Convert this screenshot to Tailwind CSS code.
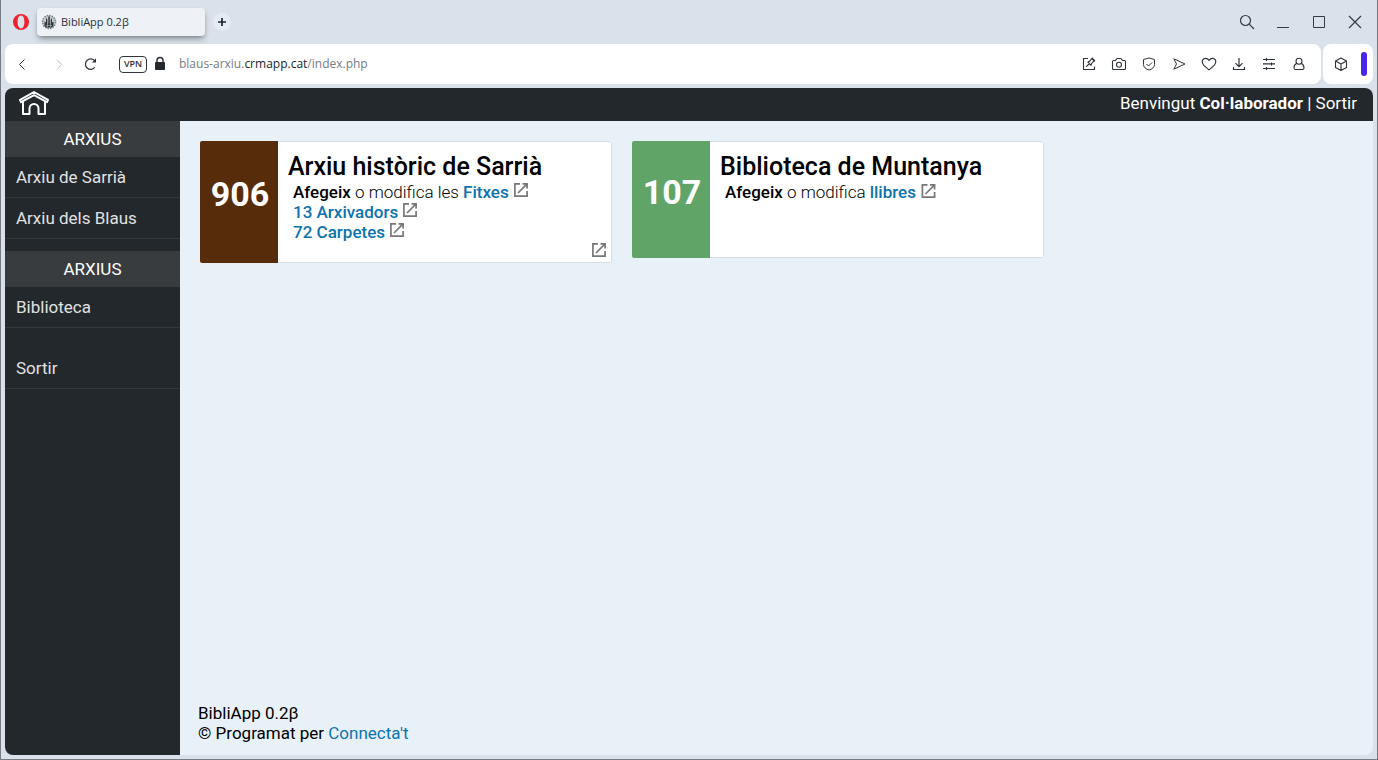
<!DOCTYPE html>
<html lang="ca">
<head>
<meta charset="utf-8">
<meta name="viewport" content="width=device-width, initial-scale=1">
<title>BibliApp 0.2β</title>
<script src="https://cdn.jsdelivr.net/npm/@tailwindcss/browser@4"></script>
</head>
<body class="flex h-screen flex-col overflow-hidden border-x border-b border-[#777b82] bg-[#d9e1ea] pr-1 pb-1 pl-1 font-['Roboto',sans-serif] text-black">
<svg class="hidden" aria-hidden="true">
  <symbol id="open" viewBox="0 0 16 16" fill="none" stroke="currentColor" stroke-width="1.7"><path d="M7 1.9H1.9V14.1H14.1V9M9.5 1.9H14.1V6.5M13.8 2.2L5 11"/></symbol>
</svg>

<!-- Tab strip -->
<div class="flex h-11 shrink-0 items-center font-['Open_Sans','Noto_Sans',sans-serif] text-[#2b3036]">
  <button class="flex w-8 items-center justify-center" aria-label="Menú d'Opera">
    <svg class="size-4" viewBox="0 0 16 16"><path fill="#f0202f" fill-rule="evenodd" d="M8 0a8 8 0 1 0 0 16A8 8 0 1 0 8 0ZM8 1.6C10.3 1.6 11.4 4.4 11.4 8S10.3 14.4 8 14.4 4.6 11.600 4.600 8 5.700 1.600 8 1.600Z"/></svg>
  </button>
  <button class="flex h-7 w-[168px] items-center gap-1 rounded bg-[#eef2f7] px-1 text-[11px] shadow-md shadow-black/30">
    <svg class="size-4" viewBox="0 0 16 16"><circle cx="8" cy="8" r="6.500" fill="#c6cbd0" stroke="#777d83" stroke-width="1.500" stroke-dasharray="1.500 1"/><path fill="#30353a" d="M3.500 12V7.500l1.500 1V4L6.300 5.500v4h1V2.500h1.500v7h1V5.500L11 4v4.500l1.500-1v4.500l-2 1.500h-5Z"/><path stroke="#aab0b5" stroke-width=".7" d="M5 11.500h6M6.500 9v4M9.500 9v4"/></svg>
    <span>BibliApp 0.2β</span>
  </button>
  <button class="ml-2 flex size-[18px] items-center justify-center rounded-full bg-[#e5ebf2]" aria-label="Pestanya nova">
    <svg class="size-2" viewBox="0 0 8 8" stroke="#20252b" stroke-width="1.700"><path d="M4 0v8M0 4h8"/></svg>
  </button>
  <div class="ml-auto flex text-[#353b42]">
    <button class="flex w-9 justify-center" aria-label="Cerca"><svg class="size-4" viewBox="0 0 16 16" fill="none" stroke="currentColor" stroke-width="1.200"><circle cx="6.500" cy="6.500" r="5"/><path d="M10.200 10.200L15 15"/></svg></button>
    <button class="flex w-9 justify-center" aria-label="Minimitza"><svg class="size-4" viewBox="0 0 16 16" stroke="currentColor"><path d="M2 13.500h12"/></svg></button>
    <button class="flex w-9 justify-center" aria-label="Maximitza"><svg class="size-4" viewBox="0 0 16 16" fill="none" stroke="currentColor"><path d="M2.500 2.500h11v11h-11z"/></svg></button>
    <button class="flex w-9 justify-center" aria-label="Tanca"><svg class="size-4" viewBox="0 0 16 16" stroke="currentColor" stroke-width="1.200"><path d="M2 2l12 12M14 2L2 14"/></svg></button>
  </div>
</div>

<!-- Address bar -->
<div class="flex h-10 shrink-0 gap-0.5 font-['Open_Sans','Noto_Sans',sans-serif] text-[#2d3238]">
  <div class="flex min-w-0 grow items-center rounded-lg bg-white pr-[7px]">
    <button class="flex w-[34px] justify-center" aria-label="Enrere"><svg class="size-4" viewBox="0 0 16 16" fill="none" stroke="currentColor"><path d="M10.500 3.500L5.500 8.500l5 5"/></svg></button>
    <button class="flex w-10 justify-center text-[#b9bdc2]" aria-label="Endavant"><svg class="size-4" viewBox="0 0 16 16" fill="none" stroke="currentColor"><path d="M6 3.500l4.500 5L6 13.500"/></svg></button>
    <button class="flex w-6 justify-center" aria-label="Recarrega"><svg class="size-4" viewBox="0 0 16 16" fill="none" stroke="currentColor" stroke-width="1.200"><path d="M11.800 11.300A5.200 5.200 0 1 1 11.800 5"/><path d="M13 2.300V6.400H9Z" fill="currentColor" stroke="none"/></svg></button>
    <button class="ml-4 flex h-[17px] w-7 items-center justify-center rounded border border-[#30353b] text-[9px] font-semibold">VPN</button>
    <svg class="ml-1 size-[18px]" viewBox="0 0 18 18"><path d="M6 8V5.500a3 3 0 0 1 6 0v2.500" fill="none" stroke="#25292e" stroke-width="1.400"/><rect x="4" y="7" width="10" height="8" rx="1" fill="#25292e"/></svg>
    <div class="ml-2.5 grow text-xs text-[#737b83] outline-none" contenteditable="true" role="textbox" aria-label="Adreça">blaus-arxiu.<span class="text-[#202428]">crmapp.cat</span>/index.php</div>
    <button class="flex w-[30px] justify-center" aria-label="Anota"><svg class="size-4" viewBox="0 0 16 16" fill="none" stroke="currentColor" stroke-width="1.100"><path d="M7 2.500H2.500v11h11V10.500M5 10.800L8.500 7.500M7 6.200l3 3 .8-2 2.800-2.700L11.200 2 8.800 5ZM10.800 2.500l3 3"/></svg></button>
    <button class="flex w-[30px] justify-center" aria-label="Captura"><svg class="size-4" viewBox="0 0 16 16" fill="none" stroke="currentColor" stroke-width="1.100"><path d="M2.500 4.500H4.500L6 2.500h4l1.500 2h2a1 1 0 0 1 1 1v7a1 1 0 0 1-1 1h-11a1 1 0 0 1-1-1v-7a1 1 0 0 1 1-1Z"/><circle cx="8" cy="8.800" r="2.500"/></svg></button>
    <button class="flex w-[30px] justify-center" aria-label="Protecció"><svg class="size-4" viewBox="0 0 16 16" fill="none" stroke="currentColor"><path d="M8 2l5.500 1.500V8.500C13.500 11.200 11 13.200 8 14 5 13.200 2.500 11.200 2.500 8.500V3.500ZM5.500 8l2 2 3.500-3.500"/></svg></button>
    <button class="flex w-[30px] justify-center" aria-label="Envia"><svg class="size-4" viewBox="0 0 16 16" fill="none" stroke="currentColor" stroke-linejoin="round"><path d="M2.800 2.800L14 8 2.800 13.200 5.500 8Z"/></svg></button>
    <button class="flex w-[30px] justify-center" aria-label="Preferits"><svg class="size-4" viewBox="0 0 16 16" fill="none" stroke="currentColor" stroke-width="1.100"><path d="M8 13.800C4.500 11 1.200 9 1.200 5.700 1.200 2.500 5.500 1 8 4.300 10.500 1 14.800 2.500 14.800 5.700 14.800 9 11.500 11 8 13.800Z"/></svg></button>
    <button class="flex w-[30px] justify-center" aria-label="Baixades"><svg class="size-4" viewBox="0 0 16 16" fill="none" stroke="currentColor" stroke-width="1.200"><path d="M8 2v8.500M4.500 7.200L8 10.700l3.500-3.500M2.500 11v2.500h11V11"/></svg></button>
    <button class="flex w-[30px] justify-center" aria-label="Configuració"><svg class="size-4" viewBox="0 0 16 16" fill="none" stroke="currentColor" stroke-width="1.100"><path d="M2 3.500h12M2 7.900h12M2 12.500h12M5.500 2v3M10.500 6.400v3M5.500 11v3"/></svg></button>
    <button class="flex w-[30px] justify-center" aria-label="Perfil"><svg class="size-4" viewBox="0 0 16 16" fill="none" stroke="currentColor" stroke-width="1.100"><circle cx="8" cy="5.200" r="3"/><path d="M5.700 7.300C3.500 8.500 3 10.500 3 12c0 1 .7 1.500 1.500 1.500h7c.8 0 1.500-.5 1.500-1.500 0-1.500-.5-3.500-2.700-4.700"/></svg></button>
  </div>
  <div class="flex w-[50px] items-center justify-between rounded-lg bg-white pr-1.5 pl-2.5">
    <button aria-label="Extensions"><svg class="size-4" viewBox="0 0 16 16" fill="none" stroke="currentColor" stroke-width="1.100" stroke-linejoin="round"><path d="M8 2l5.500 3v6.500L8 14.500 2.500 11.500V5ZM2.500 5L8 8l5.500-3M8 8v6.500"/></svg></button>
    <button class="h-6 w-1.5 rounded-full bg-[#4a26e8]" aria-label="Aria"></button>
  </div>
</div>

<!-- Web page -->
<div class="mt-1 flex min-h-0 grow flex-col overflow-hidden rounded-lg bg-[#e9f1f8]">
  <header class="flex h-[33px] shrink-0 items-center justify-between bg-[#23282d] pr-4 pb-1 pl-3.5 text-white">
    <a href="#" aria-label="Inici"><svg class="h-6 w-[30px]" viewBox="0 0 30 24" fill="none" stroke="currentColor" stroke-width="2" stroke-linejoin="round"><path d="M1 8.800L15 1l14 7.800-1 2.400L15 4.200 2 11.200ZM4 10.300V23h6.500V17.500a4.500 4.500 0 0 1 9 0V23H26V10.300"/></svg></a>
    <p class="text-[17px] leading-5">Benvingut <b class="font-bold">Col·laborador</b> | <a href="#">Sortir</a></p>
  </header>
  <div class="flex min-h-0 grow">
    <nav class="w-[175px] shrink-0 bg-[#23282d] text-[17px] leading-5 text-[#e1e1e1]">
      <h2 class="bg-[#383c3f] py-2 text-center text-white">ARXIUS</h2>
      <a href="#" class="block border-b border-[#33383d] px-[11px] py-2.5">Arxiu de Sarrià</a>
      <a href="#" class="block border-b border-[#33383d] px-[11px] py-2.5">Arxiu dels Blaus</a>
      <h2 class="mt-3 bg-[#383c3f] py-2 text-center text-white">ARXIUS</h2>
      <a href="#" class="block border-b border-[#33383d] px-[11px] py-2.5">Biblioteca</a>
      <a href="#" class="mt-5 block border-b border-[#33383d] px-[11px] py-2.5">Sortir</a>
    </nav>
    <div class="flex min-w-0 grow flex-col justify-between">
      <main class="flex items-start gap-5 p-5">
        <section class="relative flex min-h-[122px] w-[412px] overflow-hidden rounded-xs bg-white">
          <div class="w-[78px] shrink-0 bg-[#572c0b] pt-[33px] pl-0.5 text-center text-[34px] leading-10 font-bold text-white">906</div>
          <div class="grow rounded-r-xs border border-l-0 border-[#d5dce2] px-2.5 pt-2.5 text-[17px] leading-5">
            <h1 class="text-[25px] leading-[30px] font-medium">Arxiu històric de Sarrià</h1>
            <div class="pl-[5px]">
              <p class="font-light"><b class="font-medium">Afegeix</b> o modifica les <a href="#" class="font-medium text-[#0c73ae]">Fitxes <svg class="inline size-4 align-top text-[#777]"><use href="#open"/></svg></a></p>
              <p><a href="#" class="font-medium text-[#0c73ae]">13 Arxivadors <svg class="inline size-4 align-top text-[#777]"><use href="#open"/></svg></a></p>
              <p><a href="#" class="font-medium text-[#0c73ae]">72 Carpetes <svg class="inline size-4 align-top text-[#777]"><use href="#open"/></svg></a></p>
            </div>
          </div>
          <a href="#" aria-label="Obre l'arxiu" class="absolute right-[5px] bottom-[5px] text-[#777]"><svg class="size-4"><use href="#open"/></svg></a>
        </section>
        <section class="flex min-h-[117px] w-[412px] overflow-hidden rounded-xs bg-white">
          <div class="w-[78px] shrink-0 bg-[#60a468] pt-[31px] pl-0.5 text-center text-[34px] leading-10 font-bold text-white">107</div>
          <div class="grow rounded-r-xs border border-l-0 border-[#d5dce2] px-2.5 pt-2.5 text-[17px] leading-5">
            <h1 class="text-[25px] leading-[30px] font-medium">Biblioteca de Muntanya</h1>
            <p class="pl-[5px] font-light"><b class="font-medium">Afegeix</b> o modifica <a href="#" class="font-medium text-[#0c73ae]">llibres <svg class="inline size-[17px] pt-px align-top text-[#777]"><use href="#open"/></svg></a></p>
          </div>
        </section>
      </main>
      <footer class="px-[18px] pb-3 text-[17px] leading-5">
        <p>BibliApp 0.2β</p>
        <p>© Programat per <a href="#" class="text-[#0c73ae]">Connecta't</a></p>
      </footer>
    </div>
  </div>
</div>
</body>
</html>
